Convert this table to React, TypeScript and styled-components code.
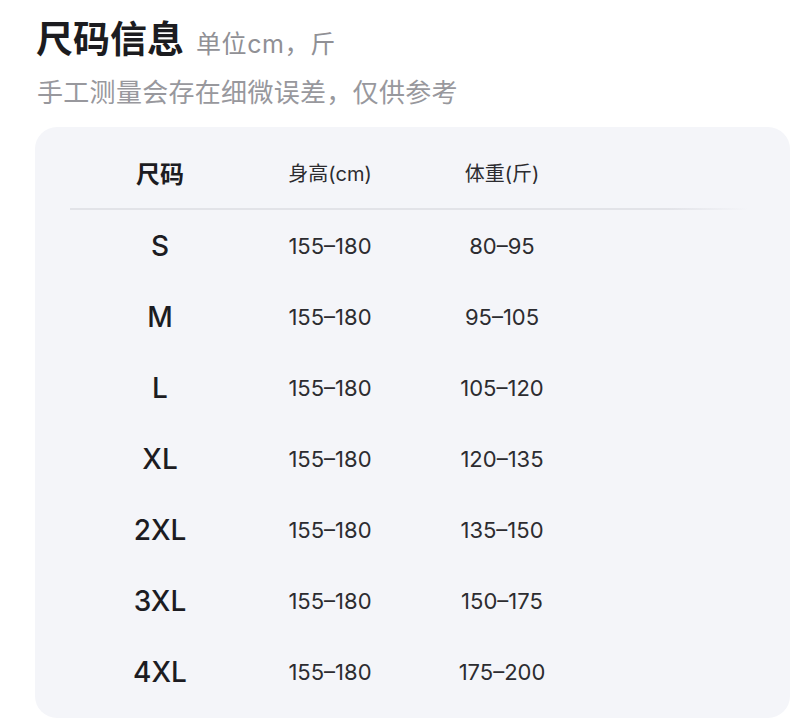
import styled, { createGlobalStyle } from 'styled-components';

const GlobalStyle = createGlobalStyle`
   body {
      margin: 0;
      background: #ffffff;
      font-family: Inter, "Noto Sans CJK SC", sans-serif;
      color: #1f1f24;
   }
`;

const Page = styled.div`
   width: 792px;
   height: 724px;
   overflow: hidden;
   padding: 14px 0 0 35px;
   box-sizing: border-box;
`;

const TitleRow = styled.div`
   display: flex;
   align-items: baseline;
   gap: 12px;
   padding-left: 1px;
`;

const Title = styled.h1`
   margin: 0;
   font-family: "Noto Sans CJK SC", sans-serif;
   font-size: 37px;
   font-weight: 700;
   line-height: 46px;
   color: #1c1c20;
`;

const Unit = styled.span`
   font-size: 25px;
   color: #909095;
   letter-spacing: 0.6px;
`;

const Note = styled.p`
   margin: 13px 0 0 2px;
   font-family: "Noto Sans CJK SC", sans-serif;
   font-size: 26px;
   line-height: 36px;
   color: #98989d;
   letter-spacing: 0.3px;
`;

const Card = styled.div`
   margin-top: 18px;
   width: 755px;
   height: 591px;
   background: #f4f5f9;
   border-radius: 22px;
   padding: 10px 0 0;
   box-sizing: border-box;
`;

const Row = styled.div`
   display: grid;
   grid-template-columns: 250px 90px 254px 1fr;
   height: 71px;
   align-items: center;
`;

const Cell = styled.div<{ $kind: 'size' | 'head' | 'value' | 'label' }>`
   text-align: center;
   white-space: nowrap;
   justify-self: center;
   font-size: ${(p) =>
      p.$kind === 'size' ? '28px' : p.$kind === 'label' ? '24px' : p.$kind === 'head' ? '20px' : '22px'};
   font-weight: ${(p) => (p.$kind === 'size' ? 500 : p.$kind === 'label' ? 600 : 400)};
   color: ${(p) => (p.$kind === 'size' || p.$kind === 'label' ? '#1c1c22' : '#2c2c30')};
`;

const Divider = styled.div`
   height: 2px;
   margin: 0 42px 0 35px;
   background: linear-gradient(to right, #e2e3e8 0%, #e2e3e8 88%, rgba(226, 227, 232, 0) 100%);
`;

const sizes = [
   { size: 'S', height: '155–180', weight: '80–95' },
   { size: 'M', height: '155–180', weight: '95–105' },
   { size: 'L', height: '155–180', weight: '105–120' },
   { size: 'XL', height: '155–180', weight: '120–135' },
   { size: '2XL', height: '155–180', weight: '135–150' },
   { size: '3XL', height: '155–180', weight: '150–175' },
   { size: '4XL', height: '155–180', weight: '175–200' },
];

function App() {
   return (
      <Page>
         <GlobalStyle />
         <TitleRow>
            <Title>尺码信息</Title>
            <Unit>单位cm，斤</Unit>
         </TitleRow>
         <Note>手工测量会存在细微误差，仅供参考</Note>
         <Card>
            <Row>
               <Cell $kind="label">尺码</Cell>
               <Cell $kind="head">身高(cm)</Cell>
               <Cell $kind="head">体重(斤)</Cell>
            </Row>
            <Divider />
            {sizes.map((item) => (
               <Row key={item.size}>
                  <Cell $kind="size">{item.size}</Cell>
                  <Cell $kind="value">{item.height}</Cell>
                  <Cell $kind="value">{item.weight}</Cell>
               </Row>
            ))}
         </Card>
      </Page>
   );
}

export default App;
